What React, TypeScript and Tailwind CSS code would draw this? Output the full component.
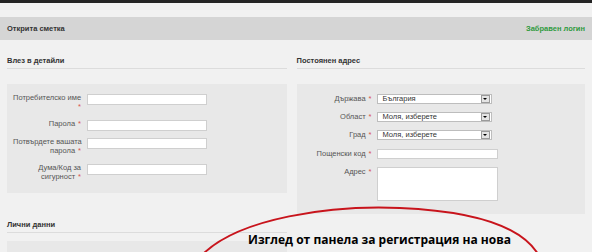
import React from "react";

const font = { fontFamily: '"Liberation Sans", Arial, sans-serif' };

function Star() {
  return <span className="ml-[3px] text-[#d9534f]">*</span>;
}

function Field({ lines, h }: { lines: string[]; h: string }) {
  return (
    <div className={`flex items-start ${h}`}>
      <div className="w-[74px] whitespace-nowrap pr-[6px] text-right text-[7.5px] leading-[8.5px] text-[#555]">
        {lines.map((l, i) => (
          <div key={i}>
            {l}
            {i === lines.length - 1 && <Star />}
          </div>
        ))}
      </div>
      <div className="h-[11px] w-[120px] border border-[#cfcfcf] bg-white" />
    </div>
  );
}

function SelectBox({ value }: { value: string }) {
  return (
    <div className="flex h-[10px] w-[115px] items-center justify-between border border-[#bdbdbd] bg-white pl-[5px] pr-[1px]">
      <span className="text-[7.5px] leading-none text-[#333]">{value}</span>
      <span className="flex h-[8px] w-[9px] items-center justify-center border border-[#9a9a9a] bg-[#e4e4e4]">
        <span className="h-0 w-0 border-l-[2px] border-r-[2px] border-t-[2px] border-l-transparent border-r-transparent border-t-black" />
      </span>
    </div>
  );
}

function AddrRow({ label, h, children }: { label: string; h: string; children: React.ReactNode }) {
  return (
    <div className={`flex items-start ${h}`}>
      <div className="w-[80px] whitespace-nowrap pr-[5px] text-right text-[7.5px] leading-[10px] text-[#555]">
        {label}
        <Star />
      </div>
      {children}
    </div>
  );
}

function SectionTitle({ children }: { children: React.ReactNode }) {
  return (
    <div className="border-b border-[#dcdcdc] pb-[2px] text-[7.5px] font-bold leading-[10px] text-[#333]">
      {children}
    </div>
  );
}

export default function App() {
  return (
    <div className="relative h-[252px] w-[592px] overflow-hidden bg-[#f1f1f1]" style={font}>
      <div className="h-[3px] bg-[#232323]" />
      <div className="h-[14px]" />
      <div className="flex h-[23px] items-center justify-between bg-[#d5d5d5] px-[7px]">
        <span className="text-[7.5px] font-bold text-[#333]">Открита сметка</span>
        <span className="text-[7.5px] font-bold text-[#2f9a3e]">Забравен логин</span>
      </div>

      <div className="flex gap-[10px] px-[7px] pt-[16px]">
        <div className="w-[281px]">
          <SectionTitle>Влез в детайли</SectionTitle>
          <div className="mt-[15px] bg-[#e8e8e8] pb-[3px] pt-[10px] pl-[6px]">
            <Field lines={["Потребителско име", ""]} h="h-[26px]" />
            <Field lines={["Парола"]} h="h-[18px]" />
            <Field lines={["Потвърдете вашата", "парола"]} h="h-[26px]" />
            <Field lines={["Дума/Код за", "сигурност"]} h="h-[26px]" />
          </div>
          <div className="mt-[27px]">
            <SectionTitle>Лични данни</SectionTitle>
          </div>
          <div className="mt-[8px] h-[20px] bg-[#e8e8e8]" />
        </div>

        <div className="w-[290px]">
          <SectionTitle>Постоянен адрес</SectionTitle>
          <div className="mt-[15px] bg-[#e8e8e8] pb-[13px] pt-[10px]">
            <AddrRow label="Държава" h="h-[18px]">
              <SelectBox value="България" />
            </AddrRow>
            <AddrRow label="Област" h="h-[18px]">
              <SelectBox value="Моля, изберете" />
            </AddrRow>
            <AddrRow label="Град" h="h-[19px]">
              <SelectBox value="Моля, изберете" />
            </AddrRow>
            <AddrRow label="Пощенски код" h="h-[18px]">
              <div className="h-[10px] w-[121px] border border-[#cfcfcf] bg-white" />
            </AddrRow>
            <AddrRow label="Адрес" h="h-[34px]">
              <div className="h-[34px] w-[121px] border border-[#cfcfcf] bg-white" />
            </AddrRow>
          </div>
        </div>
      </div>

      {/* annotation overlay */}
      <svg className="absolute left-0 top-0" width="592" height="252" viewBox="0 0 592 252">
        <path
          d="M203 254 C 240 218, 330 205, 400 208 C 470 211, 520 225, 538 254"
          fill="none"
          stroke="#c8141c"
          strokeWidth="2"
        />
      </svg>
      <div
        className="absolute left-[248px] top-[232px] text-[12px] font-bold leading-[15px] text-black"
        style={{ fontFamily: '"Open Sans", sans-serif' }}
      >
        Изглед от панела за регистрация на нова
      </div>
    </div>
  );
}
